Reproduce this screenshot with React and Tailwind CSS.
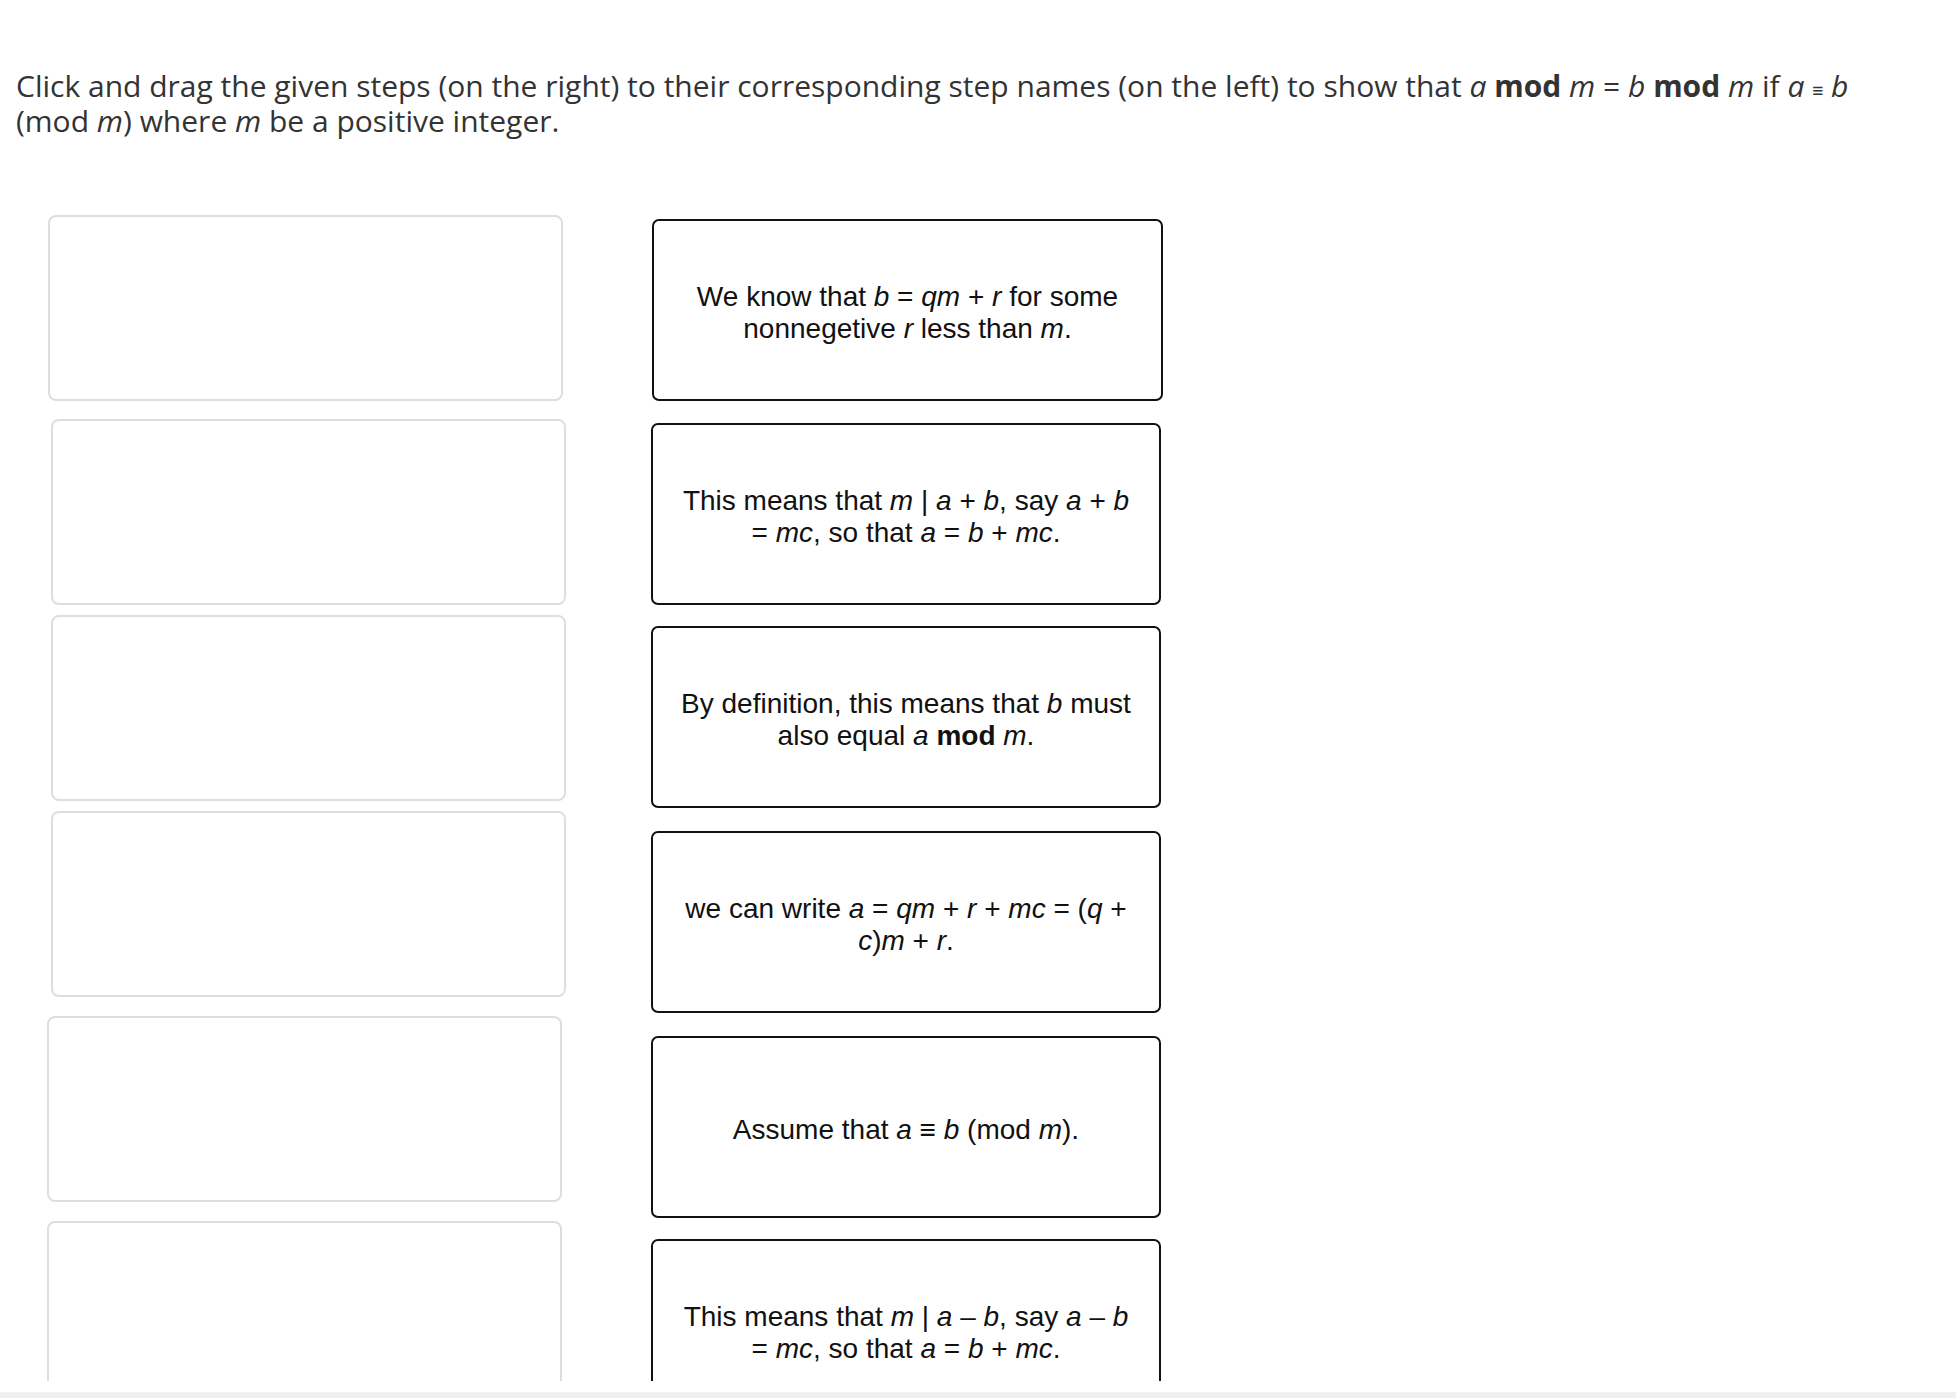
import React from "react";

const I = ({ children }) => <i className="italic">{children}</i>;
const B = ({ children }) => <b className="font-bold">{children}</b>;

const slots = [
  "ml-[1px] mt-0",
  "ml-[4px] mt-[18px]",
  "ml-[4px] mt-[10px]",
  "ml-[4px] mt-[10px]",
  "ml-0 mt-[19px]",
  "ml-0 mt-[19px]",
];

const steps = [
  {
    key: "s1",
    cls: "w-[511px] mt-0",
    body: (
      <>
        We know that <I>b</I> = <I>qm</I> + <I>r</I> for some nonnegetive <I>r</I> less than <I>m</I>.
      </>
    ),
  },
  {
    key: "s2",
    cls: "w-[510px] -ml-px mt-[22px]",
    body: (
      <>
        This means that <I>m</I> | <I>a</I> + <I>b</I>, say <I>a</I> + <I>b</I> = <I>mc</I>, so that <I>a</I> = <I>b</I> + <I>mc</I>.
      </>
    ),
  },
  {
    key: "s3",
    cls: "w-[510px] -ml-px mt-[21px]",
    body: (
      <>
        By definition, this means that <I>b</I> must also equal <I>a</I> <B>mod</B> <I>m</I>.
      </>
    ),
  },
  {
    key: "s4",
    cls: "w-[510px] -ml-px mt-[23px]",
    body: (
      <>
        we can write <I>a</I> = <I>qm</I> + <I>r</I> + <I>mc</I> = (<I>q</I> + <I>c</I>)<I>m</I> + <I>r</I>.
      </>
    ),
  },
  {
    key: "s5",
    cls: "w-[510px] -ml-px mt-[23px]",
    body: (
      <>
        Assume that <I>a</I> ≡ <I>b</I> (mod <I>m</I>).
      </>
    ),
  },
  {
    key: "s6",
    cls: "w-[510px] -ml-px mt-[21px]",
    body: (
      <>
        This means that <I>m</I> | <I>a</I> – <I>b</I>, say <I>a</I> – <I>b</I> = <I>mc</I>, so that <I>a</I> = <I>b</I> + <I>mc</I>.
      </>
    ),
  },
];

export default function App() {
  return (
    <div className="h-[1398px] bg-white flex flex-col overflow-hidden">
      <div className="h-[1381px] overflow-hidden">
        <p className="pl-4 pt-[68px] pr-[86px] text-[30px] leading-[35px] text-[#333] font-['Open_Sans',sans-serif]">
          Click and drag the given steps (on the right) to their corresponding step names (on the left) to show that{" "}
          <I>a</I> <B>mod</B> <I>m</I> = <I>b</I> <B>mod</B> <I>m</I> if <I>a</I>{" "}
          <span className="text-[19px] leading-none align-baseline">≡</span> <I>b</I>{" "}
          (mod <I>m</I>) where <I>m</I> be a positive integer.
        </p>

        <div className="flex mt-[77px] pl-[47px] gap-[85px]">
          <div className="flex flex-col w-[520px]">
            {slots.map((s, i) => (
              <div
                key={i}
                className={`${s} w-[515px] h-[186px] shrink-0 rounded-[8px] border-2 border-[#dedede] bg-white`}
              />
            ))}
          </div>

          <div className="flex flex-col pt-[4px]">
            {steps.map((st) => (
              <div
                key={st.key}
                className={`${st.cls} h-[182px] shrink-0 rounded-[7px] border-2 border-[#111] bg-white flex items-center justify-center px-[23px] pt-[6px] text-center text-[28px] leading-[32px] text-[#111] font-['Liberation_Sans',Arial,sans-serif]`}
              >
                <p>{st.body}</p>
              </div>
            ))}
          </div>
        </div>
      </div>
      <div className="h-[11px] bg-white" />
      <div className="h-[6px] bg-[#f0f0f0]" />
    </div>
  );
}
